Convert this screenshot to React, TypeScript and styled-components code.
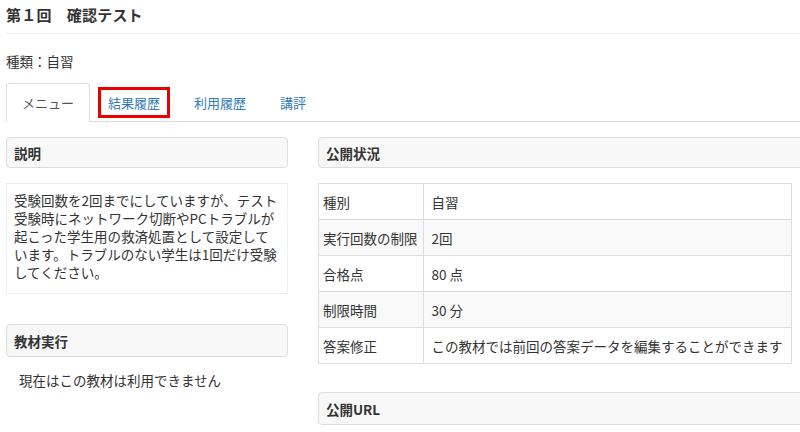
import styled, { createGlobalStyle } from 'styled-components';

const GlobalStyle = createGlobalStyle`
  html, body {
    margin: 0;
    padding: 0;
    overflow: hidden;
    background: #fff;
  }
  body {
    font-family: "Noto Sans CJK JP", "Liberation Sans", sans-serif;
    font-size: 13.5px;
    color: #333;
  }
`;

const Page = styled.div`
  width: 830px;
  padding-left: 6px;
`;

const Title = styled.h1`
  margin: 0;
  font-size: 15px;
  font-weight: bold;
  line-height: 20px;
  padding: 5px 0 8px;
  border-bottom: 1px solid #eee;
  letter-spacing: 0.2px;
`;

const Kind = styled.div`
  margin-top: 17px;
  line-height: 20px;
`;

const Nav = styled.div`
  display: flex;
  margin-top: 12px;
  border-bottom: 1px solid #ddd;
  height: 38px;
`;

const Tab = styled.div<{ $active?: boolean; $marked?: boolean }>`
  display: flex;
  align-items: center;
  box-sizing: border-box;
  padding: 0 ${({ $marked }) => ($marked ? '5px' : '15px')};
  margin-right: 2px;
  border: 1px solid ${({ $active }) => ($active ? '#ddd' : 'transparent')};
  border-bottom: none;
  border-radius: 4px 4px 0 0;
  background: #fff;
  height: ${({ $active }) => ($active ? '39px' : '38px')};
  padding-bottom: ${({ $active }) => ($active ? '1px' : '0')};
  color: ${({ $active }) => ($active ? '#555' : '#337ab7')};
  font-size: 13px;
  line-height: 18px;
  white-space: nowrap;
`;

const Marker = styled.span`
  display: inline-block;
  border: 3px solid #e60000;
  padding: 4px 7px 3px;
  line-height: 18px;
`;

const Columns = styled.div`
  display: grid;
  grid-template-columns: 282px 1fr;
  column-gap: 30px;
  margin-top: 15px;
`;

const Column = styled.div`
  display: flex;
  flex-direction: column;
  align-items: flex-start;
`;

const PanelHeading = styled.div<{ $top?: number }>`
  align-self: stretch;
  box-sizing: border-box;
  height: ${({ $top }) => ($top ? '33px' : '31px')};
  margin-top: ${({ $top }) => $top ?? 0}px;
  display: flex;
  align-items: center;
  padding: 0 7px;
  background: #f8f8f8;
  border: 1px solid #ddd;
  border-radius: 4px;
  font-weight: bold;
  color: #333;
`;

const Note = styled.div`
  align-self: stretch;
  margin-top: 15px;
  border: 1px solid #eee;
  padding: 7px 7px 12px;
  line-height: 18px;
  white-space: nowrap;
`;

const Plain = styled.div`
  margin-top: 14px;
  padding-left: 13px;
  line-height: 18px;
`;

const Table = styled.table`
  margin-top: 15px;
  border-collapse: collapse;
  border: 1px solid #ddd;
`;

const Row = styled.tr<{ $striped?: boolean }>`
  height: 36px;
  background: ${({ $striped }) => ($striped ? '#f9f9f9' : '#fff')};
`;

const Label = styled.td`
  border: 1px solid #ddd;
  padding: 0 5px 0 4px;
  white-space: nowrap;
  line-height: 18px;
`;

const Value = styled.td`
  border: 1px solid #ddd;
  padding: 0 8px;
  white-space: nowrap;
  line-height: 18px;
`;

const rows = [
  { label: '種別', value: '自習' },
  { label: '実行回数の制限', value: '2回' },
  { label: '合格点', value: '80 点' },
  { label: '制限時間', value: '30 分' },
  { label: '答案修正', value: 'この教材では前回の答案データを編集することができます' },
];

export default function App() {
  return (
    <Page>
      <GlobalStyle />
      <Title>第１回　確認テスト</Title>
      <Kind>種類：自習</Kind>
      <Nav>
        <Tab $active>メニュー</Tab>
        <Tab $marked>
          <Marker>結果履歴</Marker>
        </Tab>
        <Tab>利用履歴</Tab>
        <Tab>講評</Tab>
      </Nav>
      <Columns>
        <Column>
          <PanelHeading>説明</PanelHeading>
          <Note>
            受験回数を2回までにしていますが、テスト
            <br />
            受験時にネットワーク切断やPCトラブルが
            <br />
            起こった学生用の救済処置として設定して
            <br />
            います。トラブルのない学生は1回だけ受験
            <br />
            してください。
          </Note>
          <PanelHeading $top={30}>教材実行</PanelHeading>
          <Plain>現在はこの教材は利用できません</Plain>
        </Column>
        <Column>
          <PanelHeading>公開状況</PanelHeading>
          <Table>
            <tbody>
              {rows.map((r, i) => (
                <Row key={r.label} $striped={i % 2 === 1}>
                  <Label>{r.label}</Label>
                  <Value>{r.value}</Value>
                </Row>
              ))}
            </tbody>
          </Table>
          <PanelHeading $top={28}>公開URL</PanelHeading>
        </Column>
      </Columns>
    </Page>
  );
}
